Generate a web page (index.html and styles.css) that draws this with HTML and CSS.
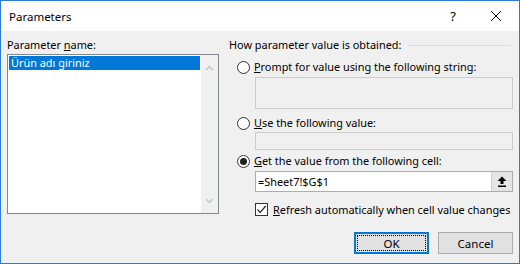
FILE: index.html
```html
<!DOCTYPE html>
<html>
<head>
<meta charset="utf-8">
<link rel="stylesheet" href="styles.css">
</head>
<body>
<div class="window">
  <div class="titlebar">
    <span class="title">Parameters</span>
    <span class="help">?</span>
    <span class="close"><svg width="12" height="12" viewBox="0 0 12 12"><path d="M1 1 L11 11 M11 1 L1 11" stroke="#000" stroke-width="1" fill="none"/></svg></span>
  </div>
  <div class="body">
    <div class="main">
      <div class="left">
        <div class="label">Parameter <u>n</u>ame:</div>
        <div class="listbox">
          <div class="items">
            <div class="item selected">Ürün adı giriniz</div>
          </div>
          <div class="scrollbar">
            <svg width="9" height="6" viewBox="0 0 9 6"><path d="M1 5 L4.5 1.5 L8 5" stroke="#c4c4c4" stroke-width="1.4" fill="none"/></svg>
            <svg width="9" height="6" viewBox="0 0 9 6"><path d="M1 1 L4.5 4.5 L8 1" stroke="#c4c4c4" stroke-width="1.4" fill="none"/></svg>
          </div>
        </div>
      </div>
      <div class="right">
        <div class="group-head"><span>How parameter value is obtained:</span><span class="rule"></span></div>
        <div class="option opt1"><span class="radio"></span><span><u>P</u>rompt for value using the following string:</span></div>
        <div class="textbox disabled tb1"></div>
        <div class="option opt2"><span class="radio"></span><span><u>U</u>se the following value:</span></div>
        <div class="textbox disabled tb2"></div>
        <div class="option opt3"><span class="radio checked"></span><span><u>G</u>et the value from the following cell:</span></div>
        <div class="textbox tb3">
          <span class="cellref">=Sheet7!$G$1</span>
          <span class="collapse"><svg width="10" height="11" viewBox="0 0 10 11"><path d="M5 0.5 L9.5 5 L6.5 5 L6.5 8 L3.5 8 L3.5 5 L0.5 5 Z" fill="#000"/><rect x="1" y="9.5" width="8" height="1.5" fill="#000"/></svg></span>
        </div>
        <div class="check-row"><span class="checkbox"><svg width="11" height="11" viewBox="0 0 11 11"><path d="M1.5 5.5 L4.2 8.3 L9.7 2" stroke="#222" stroke-width="1.2" fill="none"/></svg></span><span><u>R</u>efresh automatically when cell value changes</span></div>
      </div>
    </div>
    <div class="footer">
      <button class="btn default"><span class="focus">OK</span></button>
      <button class="btn">Cancel</button>
    </div>
  </div>
</div>
</body>
</html>
```
FILE: styles.css
```css
* { box-sizing: border-box; }
html, body { margin: 0; padding: 0; }
body {
  font-family: "Noto Sans", "DejaVu Sans", sans-serif;
  font-size: 10.9px;
  color: #000;
  background: #f0f0f0;
}
.window {
  width: 520px;
  height: 264px;
  border: 1px solid #2b7ad6;
  background: #f0f0f0;
  display: flex;
  flex-direction: column;
}
.titlebar {
  height: 30px;
  background: #fff;
  display: flex;
  align-items: center;
  padding-left: 8px;
  flex-shrink: 0;
}
.title { flex: 1; font-size: 11.5px; }
.help { width: 14px; text-align: center; margin-right: 30px; font-size: 13px; }
.close { width: 12px; height: 12px; display: flex; margin-right: 17px; }
.body {
  flex: 1;
  display: flex;
  flex-direction: column;
  padding: 6px 6px 0 6px;
}
.main { display: flex; gap: 10px; }
.left { width: 212px; flex-shrink: 0; }
.label { line-height: 16px; }
u { text-decoration: underline; text-underline-offset: 1px; }
.listbox {
  margin-top: 1px;
  height: 160px;
  border: 1px solid #828790;
  background: #fff;
  display: flex;
}
.items { flex: 1; padding: 1px; }
.item { height: 14px; line-height: 13px; padding-left: 2px; }
.item.selected { background: #0078d7; color: #fff; }
.scrollbar {
  width: 17px;
  background: #f0f0f0;
  display: flex;
  flex-direction: column;
  justify-content: space-between;
  align-items: center;
  padding: 10px 0 9px;
}
.scrollbar svg { display: block; }
.right { flex: 1; min-width: 0; display: flex; flex-direction: column; white-space: nowrap; }
.group-head { display: flex; align-items: center; line-height: 16px; }
.rule { flex: 1; height: 1px; background: #dcdcdc; margin-left: 7px; margin-right: 2px; }
.option { display: flex; align-items: center; line-height: 16px; height: 16px; margin-left: 8px; gap: 4px; }
.radio {
  width: 13px; height: 13px; border-radius: 50%;
  border: 1px solid #333; background: #fff;
  display: flex; align-items: center; justify-content: center;
  flex-shrink: 0;
}
.radio.checked::after { content: ""; width: 7px; height: 7px; border-radius: 50%; background: #222; }
.opt1 { margin-top: 6px; }
.opt2 { margin-top: 6px; }
.opt3 { margin-top: 3px; }
.textbox { margin-left: 26px; border: 1px solid #cccccc; }
.textbox.disabled { background: #f0f0f0; }
.tb1 { height: 32px; margin-top: 2px; }
.tb2 { height: 18px; margin-top: 1px; }
.tb3 {
  height: 21px; margin-top: 2px; background: #fff; border-color: #abadb3;
  display: flex; align-items: center; justify-content: space-between;
  padding: 0 0 0 2px;
}
.cellref { line-height: 16px; }
.collapse {
  width: 21px; height: 19px; background: #e5e5e5; border-left: 1px solid #cfcfcf;
  display: flex; align-items: center; justify-content: center;
}
.collapse svg { display: block; }
.check-row { display: flex; align-items: center; height: 16px; margin-top: 9px; margin-left: 26px; gap: 5px; }
.checkbox {
  width: 13px; height: 13px; border: 1px solid #333; background: #fff;
  display: flex; align-items: center; justify-content: center;
  flex-shrink: 0;
}
.checkbox svg { display: block; }
.footer { display: flex; justify-content: flex-end; gap: 9px; margin-top: 15px; }
.btn {
  width: 75px; height: 22px;
  font-family: inherit; font-size: 11.5px; color: #000;
  background: #e1e1e1; border: 1px solid #adadad;
  padding: 0; margin: 0;
  display: flex; align-items: center; justify-content: center;
}
.btn.default { border: 2px solid #0078d7; padding: 1px; }
.focus {
  flex: 1; align-self: stretch;
  border: 1px dotted #000;
  display: flex; align-items: center; justify-content: center;
}
```
